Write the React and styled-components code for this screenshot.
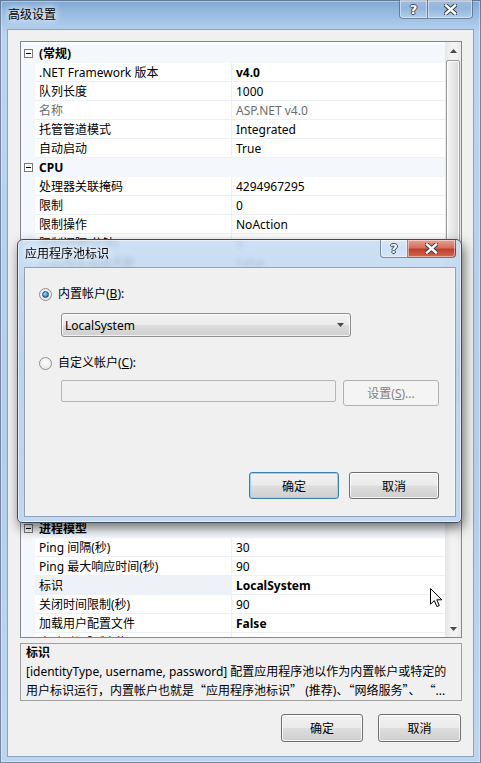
import React from "react";
import styled, { createGlobalStyle } from "styled-components";

const FONT = `"Noto Sans", "Noto Sans CJK SC", sans-serif`;
const CJK = `"Noto Sans CJK SC", sans-serif`;
const LINE = "#edf0f5";
const BAND = "#f4f7fc";

const GlobalStyle = createGlobalStyle`
  html, body { margin: 0; padding: 0; }
  body {
    width: 481px;
    height: 763px;
    overflow: hidden;
    font-family: ${FONT};
    font-size: 12px;
    color: #000;
  }
`;

const rows = [
  { cat: "(常规)" },
  { label: ".NET Framework 版本", value: "v4.0", bold: true },
  { label: "队列长度", value: "1000" },
  { label: "名称", value: "ASP.NET v4.0", gray: true },
  { label: "托管管道模式", value: "Integrated" },
  { label: "自动启动", value: "True" },
  { cat: "CPU" },
  { label: "处理器关联掩码", value: "4294967295" },
  { label: "限制", value: "0" },
  { label: "限制操作", value: "NoAction" },
  { label: "限制间隔(分钟)", value: "5" },
  { label: "已启用处理器关联", value: "False" },
  { cat: "回收" },
  { label: "发生配置更改时禁止回收", value: "False" },
  { label: "固定时间间隔(分钟)", value: "1740" },
  { label: "禁用重叠回收", value: "False" },
  { label: "请求限制", value: "0" },
  { label: "生成回收事件日志条目", value: "" },
  { label: "特定时间", value: "TimeSpan[] Array" },
  { label: "虚拟内存限制(KB)", value: "0" },
  { label: "专用内存限制(KB)", value: "0" },
  { cat: "进程孤立" },
  { label: "可执行文件", value: "" },
  { label: "可执行文件参数", value: "" },
  { label: "已启用", value: "False" },
  { cat: "进程模型" },
  { label: "Ping 间隔(秒)", value: "30" },
  { label: "Ping 最大响应时间(秒)", value: "90" },
  { label: "标识", value: "LocalSystem", bold: true, selected: true },
  { label: "关闭时间限制(秒)", value: "90" },
  { label: "加载用户配置文件", value: "False", bold: true },
  { label: "启动时间限制(秒)", value: "90" },
];

/* ---------- window chrome ---------- */

const Window = styled.div`
  position: relative;
  width: 481px;
  height: 763px;
  box-sizing: border-box;
  display: flex;
  flex-direction: column;
  padding: 0 7px 6px 7px;
  background: linear-gradient(
    180deg,
    #7fa7d4 0px,
    #a0c1e6 18px,
    #b9d4ef 34px,
    #b3cfec 60%,
    #bcd6f0 100%
  );
  box-shadow: inset 0 0 0 1px rgba(40, 60, 90, 0.55),
    inset 0 0 0 2px rgba(255, 255, 255, 0.35);
`;

const TitleBar = styled.div`
  height: 29px;
  flex: none;
  display: flex;
  justify-content: space-between;
  align-items: flex-start;
`;

const Title = styled.div`
  padding: 6px 0 0 1px;
  line-height: 18px;
  font-size: 12px;
  color: #000;
  text-shadow: 0 0 6px #fff, 0 0 10px rgba(255, 255, 255, 0.9);
`;

const Captions = styled.div`
  display: flex;
  margin-right: ${(p) => p.$right}px;
`;

const CaptionButton = styled.div`
  width: ${(p) => p.$w}px;
  height: ${(p) => p.$h}px;
  box-sizing: border-box;
  display: flex;
  align-items: center;
  justify-content: center;
  border: 1px solid rgba(50, 70, 95, 0.55);
  border-top: none;
  border-radius: ${(p) => (p.$close ? "0 0 4px 0" : "0 0 0 4px")};
  ${(p) => (p.$close ? "border-left: none;" : "")}
  background: ${(p) =>
    p.$red
      ? "linear-gradient(180deg, #e8a193 0%, #d4705f 45%, #c13e2c 55%, #d16a4f 100%)"
      : "linear-gradient(180deg, rgba(255,255,255,0.25), rgba(255,255,255,0.05) 50%, rgba(255,255,255,0.18))"};
  box-shadow: inset 0 0 0 1px rgba(255, 255, 255, 0.45);
  color: #fff;
  font-weight: bold;
  font-size: 13px;
  font-family: "DejaVu Sans", sans-serif;
  text-shadow: 1px 0 0 #39485a, -1px 0 0 #39485a, 0 1px 0 #39485a,
    0 -1px 0 #39485a;
`;

const CloseGlyph = () => (
  <svg width="13" height="11" viewBox="0 0 13 11">
    <path d="M2 1.5 L11 9.5 M11 1.5 L2 9.5" stroke="#34404f" strokeWidth="4.4" strokeLinecap="square" />
    <path d="M2 1.5 L11 9.5 M11 1.5 L2 9.5" stroke="#fff" strokeWidth="2.4" strokeLinecap="square" />
  </svg>
);

const Client = styled.div`
  flex: 1;
  display: flex;
  flex-direction: column;
  box-sizing: border-box;
  background: #f0f0f0;
  border: 1px solid #8ea3bb;
  padding: 11px 11px 13px 12px;
`;

/* ---------- property grid ---------- */

const Grid = styled.div`
  height: 597px;
  flex: none;
  display: flex;
  box-sizing: border-box;
  border: 1px solid #828790;
  background: #fff;
`;

const RowList = styled.div`
  flex: 1;
  overflow: hidden;
  padding-top: 2px;
`;

const Row = styled.div`
  display: flex;
  height: 19px;
  line-height: 19px;
  background: ${(p) => (p.$cat ? BAND : "#fff")};
`;

const Gutter = styled.div`
  width: 14px;
  flex: none;
  display: flex;
  align-items: center;
  justify-content: center;
  background: ${BAND};
`;

const ExpandBox = styled.span`
  width: 9px;
  height: 9px;
  box-sizing: border-box;
  border: 1px solid #7a7a7a;
  background: #fff;
  display: flex;
  align-items: center;
  justify-content: center;
  &::after {
    content: "";
    width: 5px;
    height: 1px;
    background: #000;
  }
`;

const Label = styled.div`
  width: 196px;
  flex: none;
  box-sizing: border-box;
  padding-left: 4px;
  white-space: nowrap;
  overflow: hidden;
  border-bottom: 1px solid ${LINE};
  background: ${(p) => (p.$selected ? "#eef1f6" : "transparent")};
  color: ${(p) => (p.$gray ? "#6d6d6d" : "#000")};
`;

const Value = styled.div`
  flex: 1;
  box-sizing: border-box;
  padding-left: 4px;
  white-space: nowrap;
  overflow: hidden;
  border-left: 1px solid ${LINE};
  border-bottom: 1px solid ${LINE};
  color: ${(p) => (p.$gray ? "#6d6d6d" : "#000")};
  font-weight: ${(p) => (p.$bold ? "bold" : "normal")};
`;

const CatLabel = styled.div`
  flex: 1;
  padding-left: 4px;
  font-weight: bold;
  white-space: nowrap;
`;

const Scrollbar = styled.div`
  width: 16px;
  flex: none;
  display: flex;
  flex-direction: column;
  background: linear-gradient(90deg, #e6e6e6, #f2f2f2 40%, #f2f2f2 70%, #e9e9e9);
`;

const ScrollArrow = styled.div`
  height: 17px;
  flex: none;
  display: flex;
  align-items: center;
  justify-content: center;
`;

const Thumb = styled.div`
  height: ${(p) => p.$len}px;
  flex: none;
  margin: 1px 1px 0 1px;
  box-sizing: border-box;
  border: 1px solid #9a9a9a;
  border-radius: 2px;
  background: linear-gradient(90deg, #f4f4f4, #e8e8e8 50%, #d9d9d9);
  box-shadow: inset 0 0 0 1px rgba(255, 255, 255, 0.8);
`;

const Track = styled.div`
  flex: 1;
`;

const Arrow = ({ up }) => (
  <svg width="7" height="4" viewBox="0 0 7 4">
    <path d={up ? "M0 4 L3.5 0 L7 4 Z" : "M0 0 L7 0 L3.5 4 Z"} fill="#4a4a4a" />
  </svg>
);

/* ---------- description + buttons ---------- */

const Description = styled.div`
  height: 58px;
  flex: none;
  margin-top: 5px;
  box-sizing: border-box;
  border: 1px solid #a0a0a0;
  padding: 0 5px;
  line-height: 18.5px;
  overflow: hidden;
`;

const DescTitle = styled.div`
  font-weight: bold;
`;

const DescLine = styled.div`
  white-space: nowrap;
  overflow: hidden;
`;

const Wide = styled.span`
  font-family: ${CJK};
`;

const ButtonRow = styled.div`
  display: flex;
  justify-content: flex-end;
  gap: ${(p) => p.$gap}px;
  margin-top: ${(p) => p.$top || 0};
  padding-right: ${(p) => p.$right || 0}px;
`;

const Button = styled.button`
  width: ${(p) => p.$w}px;
  height: ${(p) => p.$h}px;
  flex: none;
  padding: 0;
  font-family: ${FONT};
  font-size: 12px;
  color: #000;
  border-radius: 3px;
  border: 1px solid ${(p) => (p.$focus ? "#3c7fb1" : "#707070")};
  background: linear-gradient(
    180deg,
    #f2f2f2 0%,
    #ebebeb 48%,
    #dddddd 52%,
    #cfcfcf 100%
  );
  box-shadow: inset 0 0 0 1px
    ${(p) => (p.$focus ? "#8fd3f5" : "rgba(255, 255, 255, 0.75)")};
  &:disabled {
    border-color: #adb2b5;
    background: #f4f4f4;
    color: #838383;
    box-shadow: none;
  }
`;

/* ---------- modal dialog ---------- */

const Dialog = styled.div`
  position: absolute;
  left: 17px;
  top: 239px;
  width: 445px;
  height: 284px;
  box-sizing: border-box;
  display: flex;
  flex-direction: column;
  padding: 0 5px 5px 6px;
  border: 1px solid #3f4c5c;
  border-radius: 6px 6px 5px 5px;
  background: linear-gradient(
    180deg,
    rgba(198, 220, 243, 0.88) 0%,
    rgba(182, 208, 236, 0.88) 40%,
    rgba(190, 214, 240, 0.9) 100%
  );
  backdrop-filter: blur(2px);
  box-shadow: inset 0 0 0 1px rgba(255, 255, 255, 0.55),
    2px 5px 12px rgba(0, 0, 0, 0.55);
`;

const DialogTitleBar = styled.div`
  height: 27px;
  flex: none;
  display: flex;
  justify-content: space-between;
  align-items: flex-start;
`;

const DialogTitle = styled.div`
  padding: 5px 0 0 1px;
  line-height: 18px;
  text-shadow: 0 0 6px #fff, 0 0 10px rgba(255, 255, 255, 0.9);
`;

const DialogBody = styled.div`
  flex: 1;
  display: flex;
  flex-direction: column;
  box-sizing: border-box;
  background: #f0f0f0;
  border: 1px solid #8ea3bb;
  padding: 19px 16px 17px 14px;
`;

const Option = styled.div`
  display: flex;
  align-items: center;
  gap: 6px;
  height: 18px;
  margin-top: ${(p) => p.$top}px;
`;

const OptionText = styled.span`
  line-height: 18px;
  white-space: nowrap;
`;

const Radio = styled.span`
  width: 13px;
  height: 13px;
  flex: none;
  box-sizing: border-box;
  border-radius: 50%;
  border: 1px solid #8b8d8f;
  background: radial-gradient(circle at 50% 40%, #ffffff, #e2e2e2);
  display: flex;
  align-items: center;
  justify-content: center;
  &::after {
    content: "";
    display: ${(p) => (p.$checked ? "block" : "none")};
    width: 7px;
    height: 7px;
    box-sizing: border-box;
    border-radius: 50%;
    border: 1px solid #1b4f7e;
    background: radial-gradient(circle at 40% 35%, #a8e0fb, #2f7fc0 70%);
  }
`;

const Indent = styled.div`
  display: flex;
  gap: 7px;
  align-items: flex-start;
  margin: ${(p) => p.$top}px 0 0 22px;
`;

const Select = styled.div`
  width: 290px;
  height: 24px;
  box-sizing: border-box;
  display: flex;
  align-items: center;
  justify-content: space-between;
  padding: 0 6px 0 3px;
  border: 1px solid #8e8f8f;
  border-radius: 3px;
  background: linear-gradient(180deg, #f2f2f2 0%, #ebebeb 48%, #dddddd 52%, #cfcfcf 100%);
  box-shadow: inset 0 0 0 1px rgba(255, 255, 255, 0.7);
`;

const TextBox = styled.div`
  width: 276px;
  height: 22px;
  box-sizing: border-box;
  border: 1px solid #b5b5b5;
  border-radius: 2px;
  background: #f0f0f0;
`;

const Cursor = styled.svg`
  position: absolute;
  left: 430px;
  top: 588px;
`;

export default function App() {
  return (
    <>
      <GlobalStyle />
      <Window>
        <TitleBar>
          <Title>高级设置</Title>
          <Captions $right={1}>
            <CaptionButton $w={29} $h={19}>?</CaptionButton>
            <CaptionButton $w={45} $h={19} $close>
              <CloseGlyph />
            </CaptionButton>
          </Captions>
        </TitleBar>

        <Client>
          <Grid>
            <RowList>
              {rows.map((r, i) =>
                r.cat ? (
                  <Row key={i} $cat>
                    <Gutter>
                      <ExpandBox />
                    </Gutter>
                    <CatLabel>{r.cat}</CatLabel>
                  </Row>
                ) : (
                  <Row key={i}>
                    <Gutter />
                    <Label $gray={r.gray} $selected={r.selected}>
                      {r.label}
                    </Label>
                    <Value $gray={r.gray} $bold={r.bold}>
                      {r.value}
                    </Value>
                  </Row>
                )
              )}
            </RowList>
            <Scrollbar>
              <ScrollArrow>
                <Arrow up />
              </ScrollArrow>
              <Thumb $len={340} />
              <Track />
              <ScrollArrow>
                <Arrow />
              </ScrollArrow>
            </Scrollbar>
          </Grid>

          <Description>
            <DescTitle>标识</DescTitle>
            <DescLine>
              [identityType, username, password] 配置应用程序池以作为内置帐户或特定的
            </DescLine>
            <DescLine>
              用户标识运行，内置帐户也就是<Wide>“</Wide>应用程序池标识<Wide>”</Wide> (推荐)、
              <Wide>“</Wide>网络服务<Wide>”</Wide>、 <Wide>“</Wide>...
            </DescLine>
          </Description>

          <ButtonRow $gap={15} $top="13px" $right={1}>
            <Button $w={82} $h={28}>确定</Button>
            <Button $w={83} $h={28}>取消</Button>
          </ButtonRow>
        </Client>

        <Dialog>
          <DialogTitleBar>
            <DialogTitle>应用程序池标识</DialogTitle>
            <Captions $right={0}>
              <CaptionButton $w={28} $h={18}>?</CaptionButton>
              <CaptionButton $w={48} $h={18} $close $red>
                <CloseGlyph />
              </CaptionButton>
            </Captions>
          </DialogTitleBar>
          <DialogBody>
            <Option $top={-2}>
              <Radio $checked />
              <OptionText>
                内置帐户(<u>B</u>):
              </OptionText>
            </Option>
            <Indent $top={10}>
              <Select>
                <span>LocalSystem</span>
                <Arrow />
              </Select>
            </Indent>
            <Option $top={17}>
              <Radio />
              <OptionText>
                自定义帐户(<u>C</u>):
              </OptionText>
            </Option>
            <Indent $top={8}>
              <TextBox />
              <Button $w={96} $h={26} disabled>
                设置(<u>S</u>)...
              </Button>
            </Indent>
            <ButtonRow $gap={10} $top="auto">
              <Button $w={90} $h={27} $focus>
                确定
              </Button>
              <Button $w={90} $h={27}>取消</Button>
            </ButtonRow>
          </DialogBody>
        </Dialog>

        <Cursor width="13" height="20" viewBox="0 0 13 20">
          <path
            d="M0.5 0.5 L0.5 16.2 L4.3 12.6 L6.9 18.6 L9.3 17.6 L6.8 11.8 L11.8 11.8 Z"
            fill="#fff"
            stroke="#000"
            strokeWidth="1"
            strokeLinejoin="miter"
          />
        </Cursor>
      </Window>
    </>
  );
}
